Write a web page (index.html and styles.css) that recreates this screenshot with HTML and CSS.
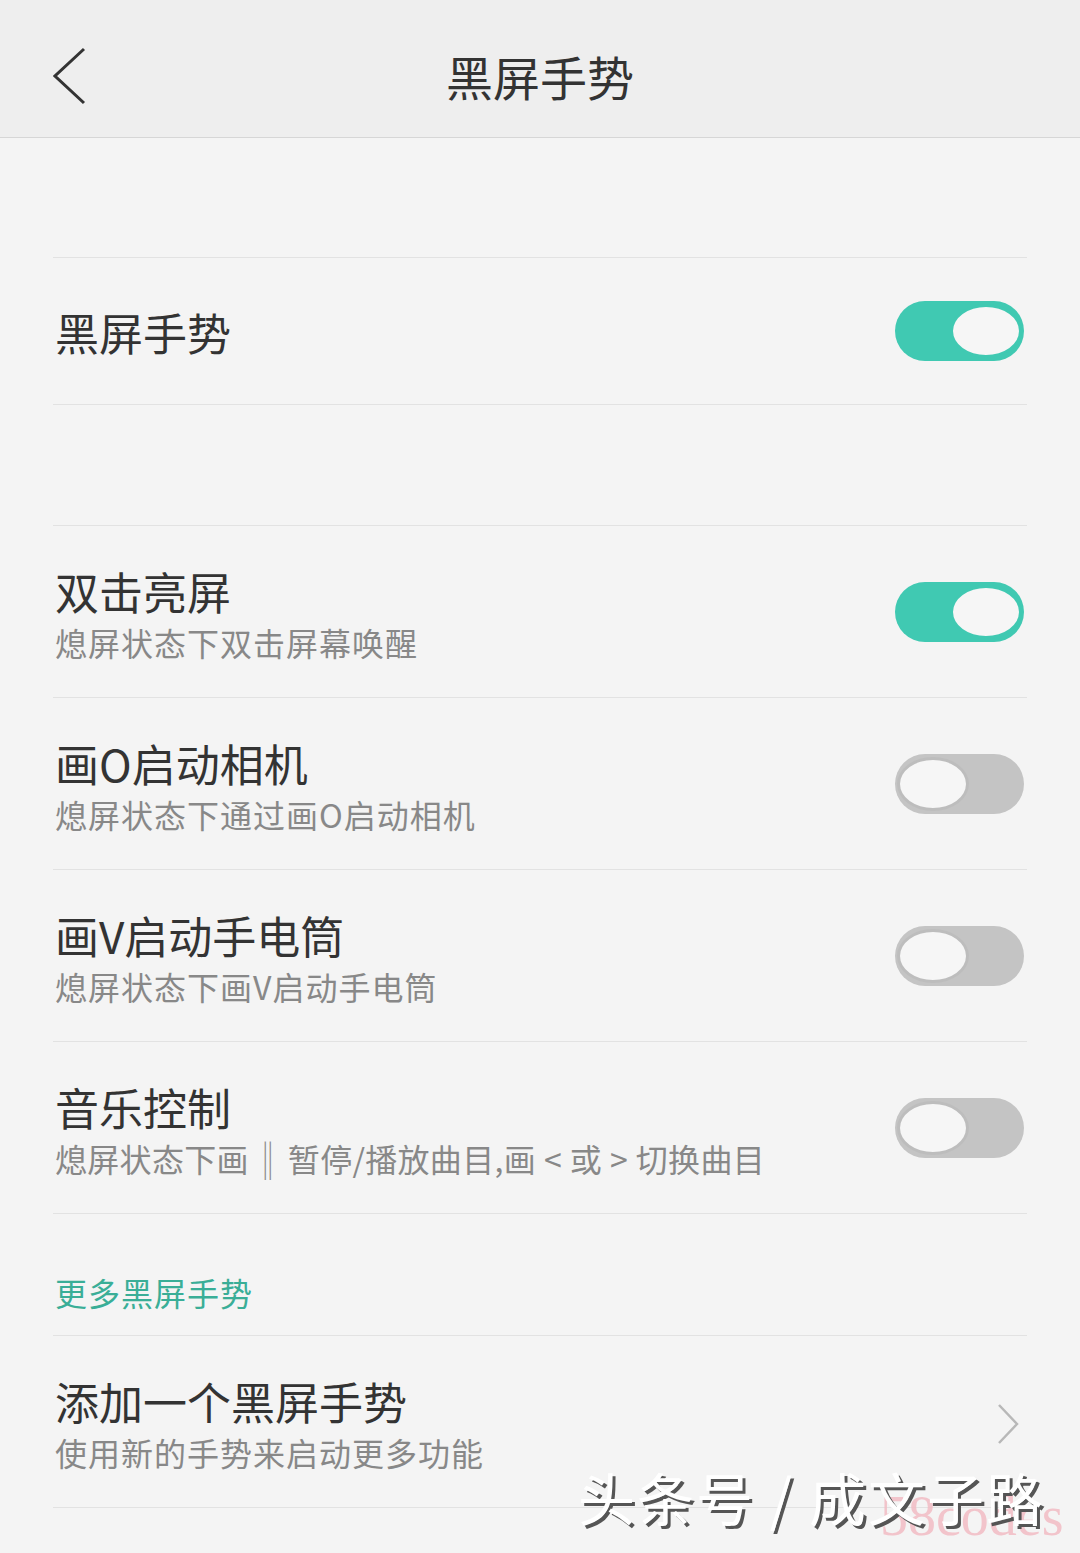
FILE: index.html
```html
<!DOCTYPE html>
<html lang="zh-CN">
<head>
  <meta charset="UTF-8">
  <title>黑屏手势</title>
  <link rel="stylesheet" href="styles.css">
</head>
<body>

  <div class="cabecalho">
    <svg class="voltar" width="40" height="60" viewBox="0 0 40 60">
      <polyline points="31,3 2,30 31,57" fill="none" stroke="#333" stroke-width="3"/>
    </svg>
    <h1 class="titulo">黑屏手势</h1>
  </div>

  <div class="conteudo">
    <div class="grupo">
      <div class="linha linha-simples">
        <div class="textos">
          <div class="nome">黑屏手势</div>
        </div>
        <span class="chave ligada"><span class="bola"></span></span>
      </div>
    </div>

    <div class="grupo grupo-meio">
      <div class="linha">
        <div class="textos">
          <div class="nome">双击亮屏</div>
          <div class="descricao">熄屏状态下双击屏幕唤醒</div>
        </div>
        <span class="chave ligada"><span class="bola"></span></span>
      </div>
      <div class="linha">
        <div class="textos">
          <div class="nome">画O启动相机</div>
          <div class="descricao">熄屏状态下通过画O启动相机</div>
        </div>
        <span class="chave"><span class="bola"></span></span>
      </div>
      <div class="linha">
        <div class="textos">
          <div class="nome">画V启动手电筒</div>
          <div class="descricao">熄屏状态下画V启动手电筒</div>
        </div>
        <span class="chave"><span class="bola"></span></span>
      </div>
      <div class="linha">
        <div class="textos">
          <div class="nome">音乐控制</div>
          <div class="descricao descricao-longa">熄屏状态下画<span class="barras">‖</span>暂停/播放曲目,画<span class="sinal">&lt;</span>或<span class="sinal">&gt;</span>切换曲目</div>
        </div>
        <span class="chave"><span class="bola"></span></span>
      </div>
    </div>

    <div class="secao">更多黑屏手势</div>

    <div class="grupo">
      <div class="linha">
        <div class="textos">
          <div class="nome">添加一个黑屏手势</div>
          <div class="descricao">使用新的手势来启动更多功能</div>
        </div>
        <svg class="seta" width="24" height="42" viewBox="0 0 24 42">
          <polyline points="3,2 21,21 3,40" fill="none" stroke="#b8b8b8" stroke-width="2.5"/>
        </svg>
      </div>
    </div>
  </div>

  <div class="marca">
    <span class="marca-codigo">58codes</span>
    <span class="marca-texto">头条号 / 成文子路</span>
  </div>

</body>
</html>
```

FILE: styles.css
```css
body {
  margin: 0;
  width: 1080px;
  height: 1553px;
  overflow: hidden;
  position: relative;
  background-color: #f4f4f4;
  color: #333;
  font-family: "Noto Sans CJK SC", "Noto Sans", sans-serif;
}

.cabecalho {
  height: 137px;
  background-color: #eeeeee;
  border-bottom: 1px solid #d6d6d6;
  display: flex;
  align-items: center;
  justify-content: center;
  position: relative;
}

.voltar {
  position: absolute;
  left: 53px;
  top: 46px;
}

.titulo {
  margin: 0;
  font-size: 47px;
  font-weight: 400;
  color: #333;
  padding-top: 14px;
  line-height: 1;
}

.conteudo {
  margin: 0 53px;
  padding-top: 119px;
}

.grupo {
  border-top: 1px solid #e2e2e2;
}

.grupo-meio {
  margin-top: 120px;
}

.linha {
  box-sizing: border-box;
  height: 172px;
  border-bottom: 1px solid #e2e2e2;
  display: flex;
  align-items: center;
  justify-content: space-between;
  padding: 0 3px 0 2px;
}

.linha-simples {
  height: 147px;
}

.textos {
  display: flex;
  flex-direction: column;
  padding-top: 4px;
}

.linha-simples .textos {
  padding-top: 2px;
}

.nome {
  font-size: 44px;
  line-height: 56px;
  color: #333;
}

.descricao {
  font-size: 32px;
  line-height: 46px;
  letter-spacing: 1px;
  color: #888;
}

.descricao-longa {
  letter-spacing: 0.3px;
}

.barras {
  display: inline-block;
  margin: 0 4px 0 3px;
  transform: scaleY(1.2);
  letter-spacing: 0;
}

.sinal {
  display: inline-block;
  margin: 0 8px;
  letter-spacing: 0;
}

.chave {
  position: relative;
  width: 129px;
  height: 60px;
  border-radius: 30px;
  background-color: #c4c4c4;
  display: block;
}

.chave .bola {
  position: absolute;
  top: 3px;
  left: 2px;
  box-sizing: border-box;
  width: 72px;
  height: 54px;
  border-radius: 50%;
  background-color: #f6f6f6;
  border: 3px solid #bdbdbd;
}

.chave.ligada {
  background-color: #40c9b2;
}

.chave.ligada .bola {
  left: auto;
  right: 2px;
  border-color: #40c9b2;
}

.seta {
  margin-right: 4px;
  margin-top: 4px;
}

.secao {
  box-sizing: border-box;
  height: 121px;
  padding: 56px 0 0 2px;
  font-size: 32px;
  line-height: 44px;
  letter-spacing: 1px;
  color: #3aae97;
}

.marca {
  position: absolute;
  left: 578px;
  top: 1456px;
  width: 500px;
  height: 97px;
}

.marca-codigo {
  position: absolute;
  left: 302px;
  top: 28px;
  font-family: "Liberation Serif", serif;
  font-size: 56px;
  color: #f2bcc4;
  opacity: 0.85;
}

.marca-texto {
  position: absolute;
  left: 0;
  top: 0;
  font-size: 57px;
  line-height: 80px;
  letter-spacing: 2px;
  color: #fff;
  white-space: nowrap;
  text-shadow: 3px 3px 0 #555;
}
```
